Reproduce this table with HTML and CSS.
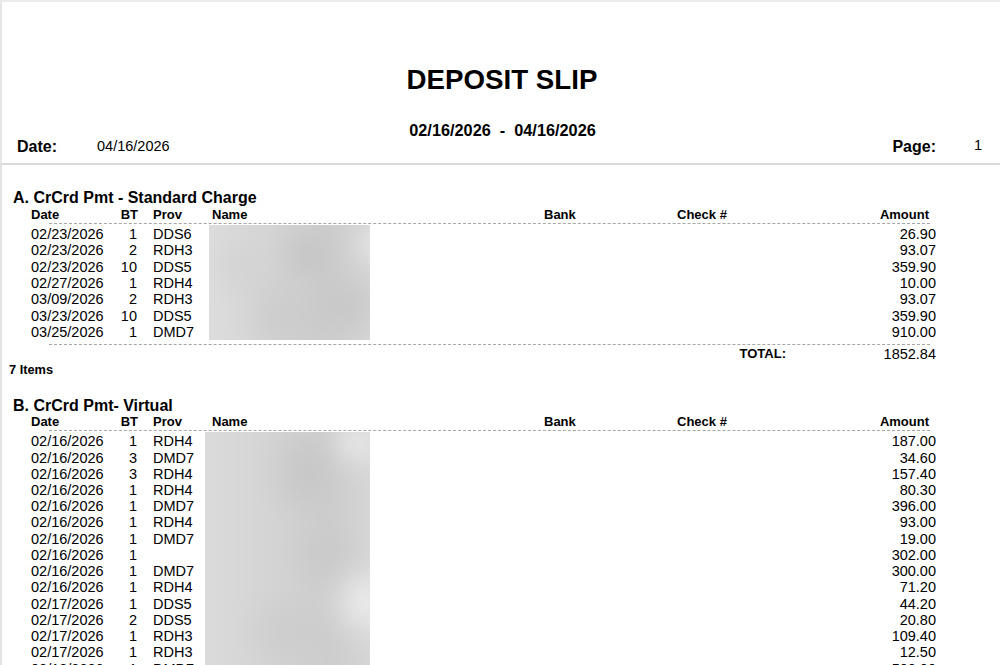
FILE: index.html
```html
<!DOCTYPE html>
<html>
<head>
<meta charset="utf-8">
<title>Deposit Slip</title>
<link rel="stylesheet" href="styles.css">
</head>
<body>
<div class="page">
  <header class="report-head">
    <h1 class="title">DEPOSIT SLIP</h1>
    <div class="range">02/16/2026  -  04/16/2026</div>
    <div class="meta">
      <div class="meta-left"><span class="meta-label">Date:</span><span class="meta-val">04/16/2026</span></div>
      <div class="meta-right"><span class="meta-label page-label">Page:</span><span class="meta-val page-val">1</span></div>
    </div>
  </header>

  <main class="report-body">
    <section class="group">
      <h2 class="group-title">A. CrCrd Pmt - Standard Charge</h2>
      <div class="cols head-row">
        <span class="h-date">Date</span><span class="h-bt">BT</span><span class="h-prov">Prov</span><span class="h-name">Name</span><span class="h-bank">Bank</span><span class="h-check">Check #</span><span class="h-amt">Amount</span>
      </div>
      <div class="rule"></div>
      <div class="cols rows">
        <div class="blur blur-a" style="grid-row: 1 / span 7"><div class="blur-in"></div></div>
        <span class="c-date">02/23/2026</span><span class="c-bt">1</span><span class="c-prov">DDS6</span><span class="c-amt">26.90</span>
        <span class="c-date">02/23/2026</span><span class="c-bt">2</span><span class="c-prov">RDH3</span><span class="c-amt">93.07</span>
        <span class="c-date">02/23/2026</span><span class="c-bt">10</span><span class="c-prov">DDS5</span><span class="c-amt">359.90</span>
        <span class="c-date">02/27/2026</span><span class="c-bt">1</span><span class="c-prov">RDH4</span><span class="c-amt">10.00</span>
        <span class="c-date">03/09/2026</span><span class="c-bt">2</span><span class="c-prov">RDH3</span><span class="c-amt">93.07</span>
        <span class="c-date">03/23/2026</span><span class="c-bt">10</span><span class="c-prov">DDS5</span><span class="c-amt">359.90</span>
        <span class="c-date">03/25/2026</span><span class="c-bt">1</span><span class="c-prov">DMD7</span><span class="c-amt">910.00</span>
      </div>
      <div class="rule rule-bottom"></div>
      <div class="total-row"><span class="total-label">TOTAL:</span><span class="total-val">1852.84</span></div>
      <div class="count">7 Items</div>
    </section>

    <section class="group group-b">
      <h2 class="group-title">B. CrCrd Pmt- Virtual</h2>
      <div class="cols head-row">
        <span class="h-date">Date</span><span class="h-bt">BT</span><span class="h-prov">Prov</span><span class="h-name">Name</span><span class="h-bank">Bank</span><span class="h-check">Check #</span><span class="h-amt">Amount</span>
      </div>
      <div class="rule"></div>
      <div class="cols rows">
        <div class="blur blur-b" style="grid-row: 1 / span 15"><div class="blur-in"></div></div>
        <span class="c-date">02/16/2026</span><span class="c-bt">1</span><span class="c-prov">RDH4</span><span class="c-amt">187.00</span>
        <span class="c-date">02/16/2026</span><span class="c-bt">3</span><span class="c-prov">DMD7</span><span class="c-amt">34.60</span>
        <span class="c-date">02/16/2026</span><span class="c-bt">3</span><span class="c-prov">RDH4</span><span class="c-amt">157.40</span>
        <span class="c-date">02/16/2026</span><span class="c-bt">1</span><span class="c-prov">RDH4</span><span class="c-amt">80.30</span>
        <span class="c-date">02/16/2026</span><span class="c-bt">1</span><span class="c-prov">DMD7</span><span class="c-amt">396.00</span>
        <span class="c-date">02/16/2026</span><span class="c-bt">1</span><span class="c-prov">RDH4</span><span class="c-amt">93.00</span>
        <span class="c-date">02/16/2026</span><span class="c-bt">1</span><span class="c-prov">DMD7</span><span class="c-amt">19.00</span>
        <span class="c-date">02/16/2026</span><span class="c-bt">1</span><span class="c-prov"></span><span class="c-amt">302.00</span>
        <span class="c-date">02/16/2026</span><span class="c-bt">1</span><span class="c-prov">DMD7</span><span class="c-amt">300.00</span>
        <span class="c-date">02/16/2026</span><span class="c-bt">1</span><span class="c-prov">RDH4</span><span class="c-amt">71.20</span>
        <span class="c-date">02/17/2026</span><span class="c-bt">1</span><span class="c-prov">DDS5</span><span class="c-amt">44.20</span>
        <span class="c-date">02/17/2026</span><span class="c-bt">2</span><span class="c-prov">DDS5</span><span class="c-amt">20.80</span>
        <span class="c-date">02/17/2026</span><span class="c-bt">1</span><span class="c-prov">RDH3</span><span class="c-amt">109.40</span>
        <span class="c-date">02/17/2026</span><span class="c-bt">1</span><span class="c-prov">RDH3</span><span class="c-amt">12.50</span>
        <span class="c-date">02/18/2026</span><span class="c-bt">1</span><span class="c-prov">DMD7</span><span class="c-amt">500.00</span>
      </div>
    </section>
  </main>
</div>
</body>
</html>
```

FILE: styles.css
```css
* { box-sizing: border-box; }
html, body {
  margin: 0;
  padding: 0;
  background: #fff;
  height: 665px;
  overflow: hidden;
}
body {
  font-family: "Liberation Sans", Arial, sans-serif;
  color: #000;
}
.page {
  width: 1000px;
}
.report-head {
  height: 165px;
  border-top: 2px solid #ececec;
  border-left: 2px solid #e6e6e6;
  border-bottom: 2px solid #d9d9d9;
  padding-top: 62px;
  display: flex;
  flex-direction: column;
}
.title {
  margin: 0;
  font-size: 27.7px;
  line-height: 32px;
  font-weight: bold;
  text-align: center;
  padding-left: 2px;
}
.range {
  margin-top: 26px;
  font-size: 16.3px;
  line-height: 16px;
  font-weight: bold;
  text-align: center;
  white-space: pre;
  padding-left: 3px;
}
.meta {
  display: flex;
  justify-content: space-between;
  align-items: center;
  height: 16px;
  padding-left: 15px;
}
.meta-left, .meta-right {
  display: flex;
  align-items: center;
}
.meta-label {
  font-weight: bold;
  font-size: 16px;
  line-height: 16px;
  width: 80px;
  position: relative;
  top: 1px;
}
.meta-val {
  font-size: 14.5px;
  line-height: 16px;
}
.page-label {
  width: auto;
  margin-right: 38px;
}
.page-val {
  width: 26px;
  position: relative;
  top: -1px;
}

.report-body {
  border-left: 2px solid #e2e2e2;
  padding-top: 24px;
  height: 500px;
}
.group-title {
  margin: 0 0 0 11px;
  font-size: 16px;
  line-height: 18px;
  font-weight: bold;
}
.group-b {
  margin-top: 19px;
}
.group-b .group-title {
  line-height: 17px;
}
.cols {
  display: grid;
  grid-template-columns: 80px 27px 71px 161px 174px 133px 159px 100px;
  margin-left: 29px;
  width: 905px;
}
.head-row {
  font-size: 13px;
  font-weight: bold;
  line-height: 16px;
}
.h-bt { grid-column: 2; text-align: right; }
.h-prov { grid-column: 3; padding-left: 15px; }
.h-name { grid-column: 4; padding-left: 3px; }
.h-bank { grid-column: 6; }
.h-check { grid-column: 7; }
.h-amt { grid-column: 8; text-align: right; padding-right: 7px; }

.rule {
  margin-left: 47px;
  width: 881px;
  border-top: 1px dashed #a6a6a6;
  height: 0;
}
.rule-bottom {
  margin-top: 3.5px;
}
.rows {
  padding-top: 2px;
  grid-auto-rows: 16.33px;
  font-size: 14.5px;
  line-height: 16.33px;
}
.group-b .rows {
  padding-top: 2px;
  grid-auto-rows: 16.24px;
  line-height: 16.24px;
}
.c-date { grid-column: 1; }
.c-bt { grid-column: 2; text-align: right; padding-right: 1px; }
.c-prov { grid-column: 3; padding-left: 15px; }
.c-amt { grid-column: 8; text-align: right; }

.blur {
  grid-column: 4;
  overflow: hidden;
  position: relative;
  background: #e2e2e2;
  margin-top: -1px;
}
.blur-in {
  position: absolute;
  inset: -30px;
  filter: blur(11px);
}
.blur-a .blur-in {
  background:
    radial-gradient(ellipse 40px 30px at 130px 60px, #c4c4c4, transparent),
    radial-gradient(ellipse 50px 40px at 170px 110px, #c6c6c6, transparent),
    radial-gradient(ellipse 40px 50px at 100px 120px, #cbcbcb, transparent),
    radial-gradient(ellipse 30px 40px at 60px 70px, #d2d2d2, transparent),
    radial-gradient(ellipse 30px 20px at 200px 50px, #eeeeee, transparent),
    linear-gradient(90deg, #e0e0e0 0%, #d5d5d5 40%, #cbcbcb 65%, #d8d8d8 90%, #e8e8e8 100%);
}
.blur.blur-b {
  margin-left: -4px;
  height: 235px;
}
.blur-b .blur-in {
  background:
    radial-gradient(ellipse 40px 50px at 130px 70px, #c5c5c5, transparent),
    radial-gradient(ellipse 40px 40px at 150px 150px, #c9c9c9, transparent),
    radial-gradient(ellipse 50px 40px at 110px 230px, #cccccc, transparent),
    radial-gradient(ellipse 40px 40px at 190px 200px, #f0f0f0, transparent),
    radial-gradient(ellipse 30px 30px at 180px 40px, #eeeeee, transparent),
    linear-gradient(90deg, #dedede 0%, #d3d3d3 45%, #cccccc 70%, #dedede 100%);
}

.total-row {
  display: flex;
  justify-content: flex-end;
  width: 934px;
  margin-top: 1.5px;
  line-height: 16px;
  height: 16px;
}
.total-label {
  font-size: 13px;
  font-weight: bold;
  margin-right: 50px;
}
.total-val {
  width: 100px;
  text-align: right;
  font-size: 14.5px;
}
.count {
  font-size: 12.8px;
  font-weight: bold;
  line-height: 16px;
  margin-left: 7px;
}
```
